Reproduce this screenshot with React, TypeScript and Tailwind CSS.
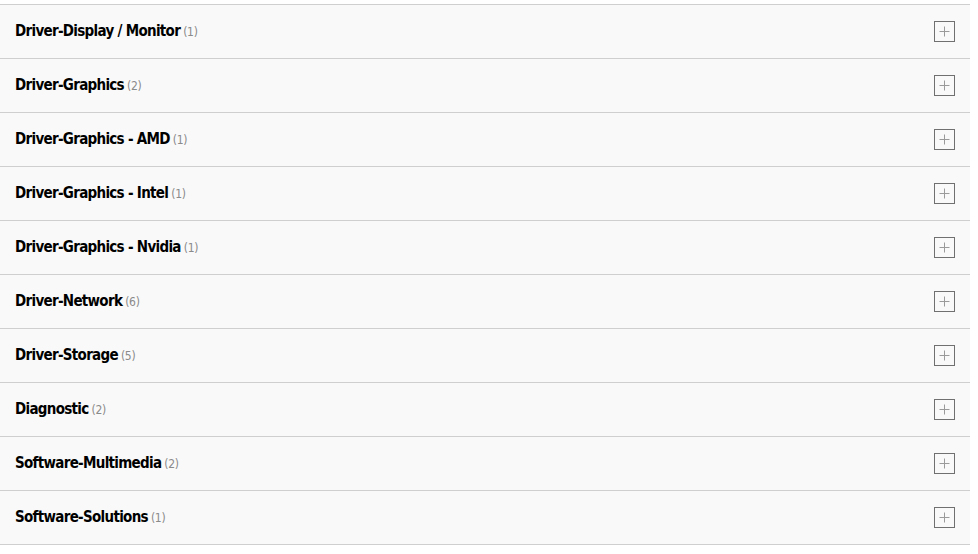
import React from 'react';

const categories = [
  { name: 'Driver-Display / Monitor', count: 1 },
  { name: 'Driver-Graphics', count: 2 },
  { name: 'Driver-Graphics - AMD', count: 1 },
  { name: 'Driver-Graphics - Intel', count: 1 },
  { name: 'Driver-Graphics - Nvidia', count: 1 },
  { name: 'Driver-Network', count: 6 },
  { name: 'Driver-Storage', count: 5 },
  { name: 'Diagnostic', count: 2 },
  { name: 'Software-Multimedia', count: 2 },
  { name: 'Software-Solutions', count: 1 },
];

const App = (): React.ReactNode => {
  return (
    <div className="w-[978px] h-[554px] bg-white pt-1">
      <ul className="w-[970px] border-t border-[#cfcfcf] bg-[#f9f9f9]">
        {categories.map((cat) => (
          <li
            key={cat.name}
            className="flex items-center justify-between h-[54px] border-b border-[#cfcfcf] pl-[15px] pr-[15px]"
          >
            <span className="flex items-baseline gap-[3px] font-['DejaVu_Sans_Condensed',sans-serif]">
              <span className="text-[15px] font-bold text-black tracking-[-0.7px]">{cat.name}</span>
              <span className="text-[12px] text-[#8a8a8a] tracking-[-0.3px]">({cat.count})</span>
            </span>
            <button className="flex items-center justify-center w-[21px] h-[21px] border border-[#707070] bg-transparent">
              <svg width="11" height="11" viewBox="0 0 11 11">
                <path d="M5.5 0.5v10M0.5 5.5h10" stroke="#9a9a9a" strokeWidth="1" />
              </svg>
            </button>
          </li>
        ))}
      </ul>
    </div>
  );
};

export default App;
